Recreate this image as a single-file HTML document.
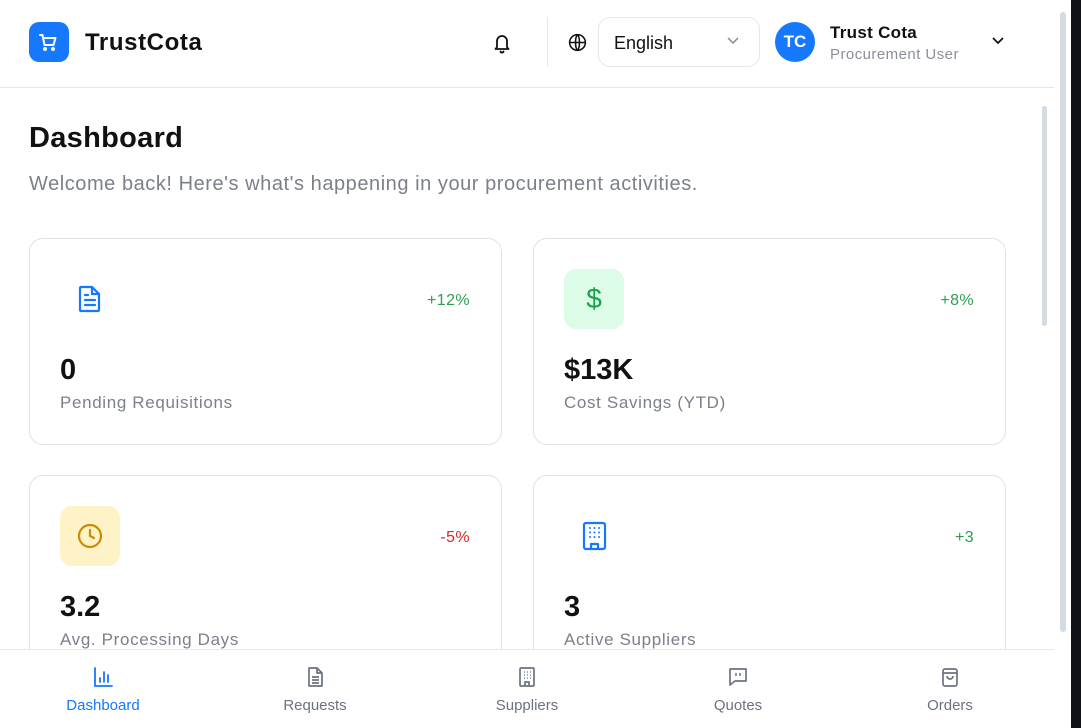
<!DOCTYPE html>
<html><head><meta charset="utf-8"><style>
*{box-sizing:border-box;margin:0;padding:0}
body{width:1081px;height:728px;overflow:hidden;background:#fff;font-family:"Liberation Sans",sans-serif;position:relative;color:#111}
.hdr{position:absolute;left:0;top:0;width:1054px;height:88px;border-bottom:1px solid #e5e7eb;background:#fff}
.logo{position:absolute;left:29px;top:22px;width:40px;height:40px;border-radius:10px;background:#1677ff}
.brand{position:absolute;left:85px;top:29px;font-size:24px;font-weight:600;letter-spacing:0.6px}
.sep{position:absolute;left:547px;top:17px;width:1px;height:50px;background:#e5e7eb}
.lang{position:absolute;left:598px;top:17px;width:162px;height:50px;border:1px solid #e5e7eb;border-radius:12px;font-size:18px;padding:15px 0 0 15px;color:#111}
.av{position:absolute;left:775px;top:22px;width:40px;height:40px;border-radius:50%;background:#1677ff;color:#fff;font-size:17px;font-weight:600;text-align:center;line-height:40px}
.un{position:absolute;left:830px;top:23px;font-size:17px;font-weight:600;letter-spacing:0.3px}
.ur{position:absolute;left:830px;top:46px;font-size:15px;color:#8a8f99;letter-spacing:0.45px}
h1{position:absolute;left:29px;top:122px;font-size:29px;font-weight:600;letter-spacing:0.3px}
.sub{position:absolute;left:29px;top:173px;font-size:20px;color:#7b808a;letter-spacing:0.55px}
.card{position:absolute;width:473px;height:207px;border:1px solid #dfe1e5;border-radius:14px;background:#fff}
.ic{position:absolute;left:30px;top:30px;width:60px;height:60px;border-radius:12px;display:flex;align-items:center;justify-content:center}
.pct{position:absolute;right:31px;top:53px;font-size:16px;letter-spacing:0.4px}
.val{position:absolute;left:30px;top:115px;font-size:29px;font-weight:700}
.lbl{position:absolute;left:30px;top:154px;font-size:17px;color:#7b808a;letter-spacing:0.65px}
.nav{position:absolute;left:0;top:649px;width:1054px;height:79px;border-top:1px solid #e5e7eb;background:#fff}
.ni{position:absolute;top:16px;width:120px;text-align:center;font-size:15px;color:#6b7280}
.ni svg{display:block;margin:0 auto 9px}
.sb1{position:absolute;left:1055px;top:0;width:16px;height:728px;background:#fff}
.sb1 .t{position:absolute;left:5px;top:12px;width:6px;height:620px;border-radius:3px;background:#d3dbe3}
.dk{position:absolute;left:1071px;top:0;width:10px;height:728px;background:#111218}
.sb2{position:absolute;left:1042px;top:106px;width:5px;height:220px;border-radius:3px;background:#d3dbe3}
</style></head><body>
<div class="hdr">
<div class="logo"><svg width="40" height="40" viewBox="0 0 40 40" fill="none" stroke="#fff" stroke-width="2" stroke-linecap="round" stroke-linejoin="round"><path d="M11 13h2.5l2 10h9l2-7H15"/><circle cx="16" cy="27" r="1" fill="#fff"/><circle cx="24" cy="27" r="1" fill="#fff"/></svg></div>
<div class="brand">TrustCota</div>
<svg style="position:absolute;left:492px;top:32px" width="20" height="22" viewBox="0 0 20 22" fill="none" stroke="#111" stroke-width="1.8" stroke-linecap="round" stroke-linejoin="round"><path d="M5 15V9a5 5 0 0 1 10 0v6l1.5 2h-13z"/><path d="M8.5 19.5a1.6 1.6 0 0 0 3 0"/></svg>
<div class="sep"></div>
<svg style="position:absolute;left:567px;top:32px" width="21" height="21" viewBox="0 0 24 24" fill="none" stroke="#111" stroke-width="1.8"><circle cx="12" cy="12" r="9"/><path d="M3 12h18M12 3c3 3 3 15 0 18M12 3c-3 3-3 15 0 18"/></svg>
<div class="lang">English<svg style="position:absolute;left:127px;top:18px" width="14" height="10" viewBox="0 0 14 10" fill="none" stroke="#888" stroke-width="1.5"><path d="M2 2l5 5 5-5"/></svg></div>
<div class="av">TC</div>
<div class="un">Trust Cota</div>
<div class="ur">Procurement User</div>
<svg style="position:absolute;left:990px;top:35px" width="16" height="12" viewBox="0 0 16 12" fill="none" stroke="#111" stroke-width="1.8"><path d="M3 3l5 5 5-5"/></svg>
</div>
<h1>Dashboard</h1>
<div class="sub">Welcome back! Here's what's happening in your procurement activities.</div>

<div class="card" style="left:29px;top:238px">
<div class="ic"><svg width="26" height="30" viewBox="0 0 26 30" fill="none" stroke="#1677ff" stroke-width="2.2" stroke-linejoin="round" stroke-linecap="round"><path d="M4 3h11l7 7v16a1 1 0 0 1-1 1H4a1 1 0 0 1-1-1V4a1 1 0 0 1 1-1z"/><path d="M15 3v7h7M8 11h3M8 16h10M8 21h10"/></svg></div>
<div class="pct" style="color:#2e9e4f">+12%</div><div class="val">0</div><div class="lbl">Pending Requisitions</div></div>

<div class="card" style="left:533px;top:238px">
<div class="ic" style="background:#dcfce7"><span style="color:#16a34a;font-size:28px">$</span></div>
<div class="pct" style="color:#2e9e4f">+8%</div><div class="val">$13K</div><div class="lbl">Cost Savings (YTD)</div></div>

<div class="card" style="left:29px;top:475px">
<div class="ic" style="background:#fef3c7"><svg width="30" height="30" viewBox="0 0 30 30" fill="none" stroke="#ca8a04" stroke-width="2.2" stroke-linecap="round"><circle cx="15" cy="15" r="11"/><path d="M15 9v6l4 2"/></svg></div>
<div class="pct" style="color:#dc2626">-5%</div><div class="val">3.2</div><div class="lbl">Avg. Processing Days</div></div>

<div class="card" style="left:533px;top:475px">
<div class="ic"><svg width="26" height="30" viewBox="0 0 26 30" fill="none" stroke="#1677ff" stroke-width="2.2" stroke-linejoin="round"><rect x="3" y="2" width="21" height="26" rx="2"/><path d="M10 28v-5h7v5"/><g fill="#1677ff" stroke="none"><circle cx="9" cy="7" r="1"/><circle cx="13.5" cy="7" r="1"/><circle cx="18" cy="7" r="1"/><circle cx="9" cy="11.5" r="1"/><circle cx="13.5" cy="11.5" r="1"/><circle cx="18" cy="11.5" r="1"/><circle cx="9" cy="16" r="1"/><circle cx="13.5" cy="16" r="1"/><circle cx="18" cy="16" r="1"/></g></svg></div>
<div class="pct" style="color:#2e9e4f">+3</div><div class="val">3</div><div class="lbl">Active Suppliers</div></div>

<div class="nav">
<div class="ni" style="left:43px;color:#1677ff"><svg width="22" height="22" viewBox="0 0 22 22" fill="none" stroke="#1677ff" stroke-width="1.8" stroke-linecap="round"><path d="M3 2v18h17M8 16v-4M12 16V6M16 16v-7"/></svg>Dashboard</div>
<div class="ni" style="left:255px"><svg width="22" height="22" viewBox="0 0 22 22" fill="none" stroke="#6b7280" stroke-width="1.7" stroke-linejoin="round"><path d="M5 2h8l5 5v13H5z"/><path d="M13 2v5h5M8 11h7M8 14h7M8 17h7"/></svg>Requests</div>
<div class="ni" style="left:467px"><svg width="22" height="22" viewBox="0 0 22 22" fill="none" stroke="#6b7280" stroke-width="1.7"><rect x="4" y="2" width="14" height="18" rx="1"/><path d="M9 20v-4h4v4" /><path d="M8 6h1M11 6h1M14 6h1M8 9h1M11 9h1M14 9h1M8 12h1M11 12h1M14 12h1" stroke-width="1.2"/></svg>Suppliers</div>
<div class="ni" style="left:678px"><svg width="22" height="22" viewBox="0 0 22 22" fill="none" stroke="#6b7280" stroke-width="1.7" stroke-linejoin="round"><path d="M3 3h16v12H8l-5 4z"/><path d="M9 7v3M13 7v3" stroke-width="1.5"/></svg>Quotes</div>
<div class="ni" style="left:890px"><svg width="22" height="22" viewBox="0 0 22 22" fill="none" stroke="#6b7280" stroke-width="1.7" stroke-linejoin="round"><rect x="4" y="3" width="14" height="17" rx="2"/><path d="M4 7h14M8 10a3 3 0 0 0 6 0"/></svg>Orders</div>
</div>
<div class="sb2"></div>
<div class="sb1"><div class="t"></div></div>
<div class="dk"></div>
</body></html>
